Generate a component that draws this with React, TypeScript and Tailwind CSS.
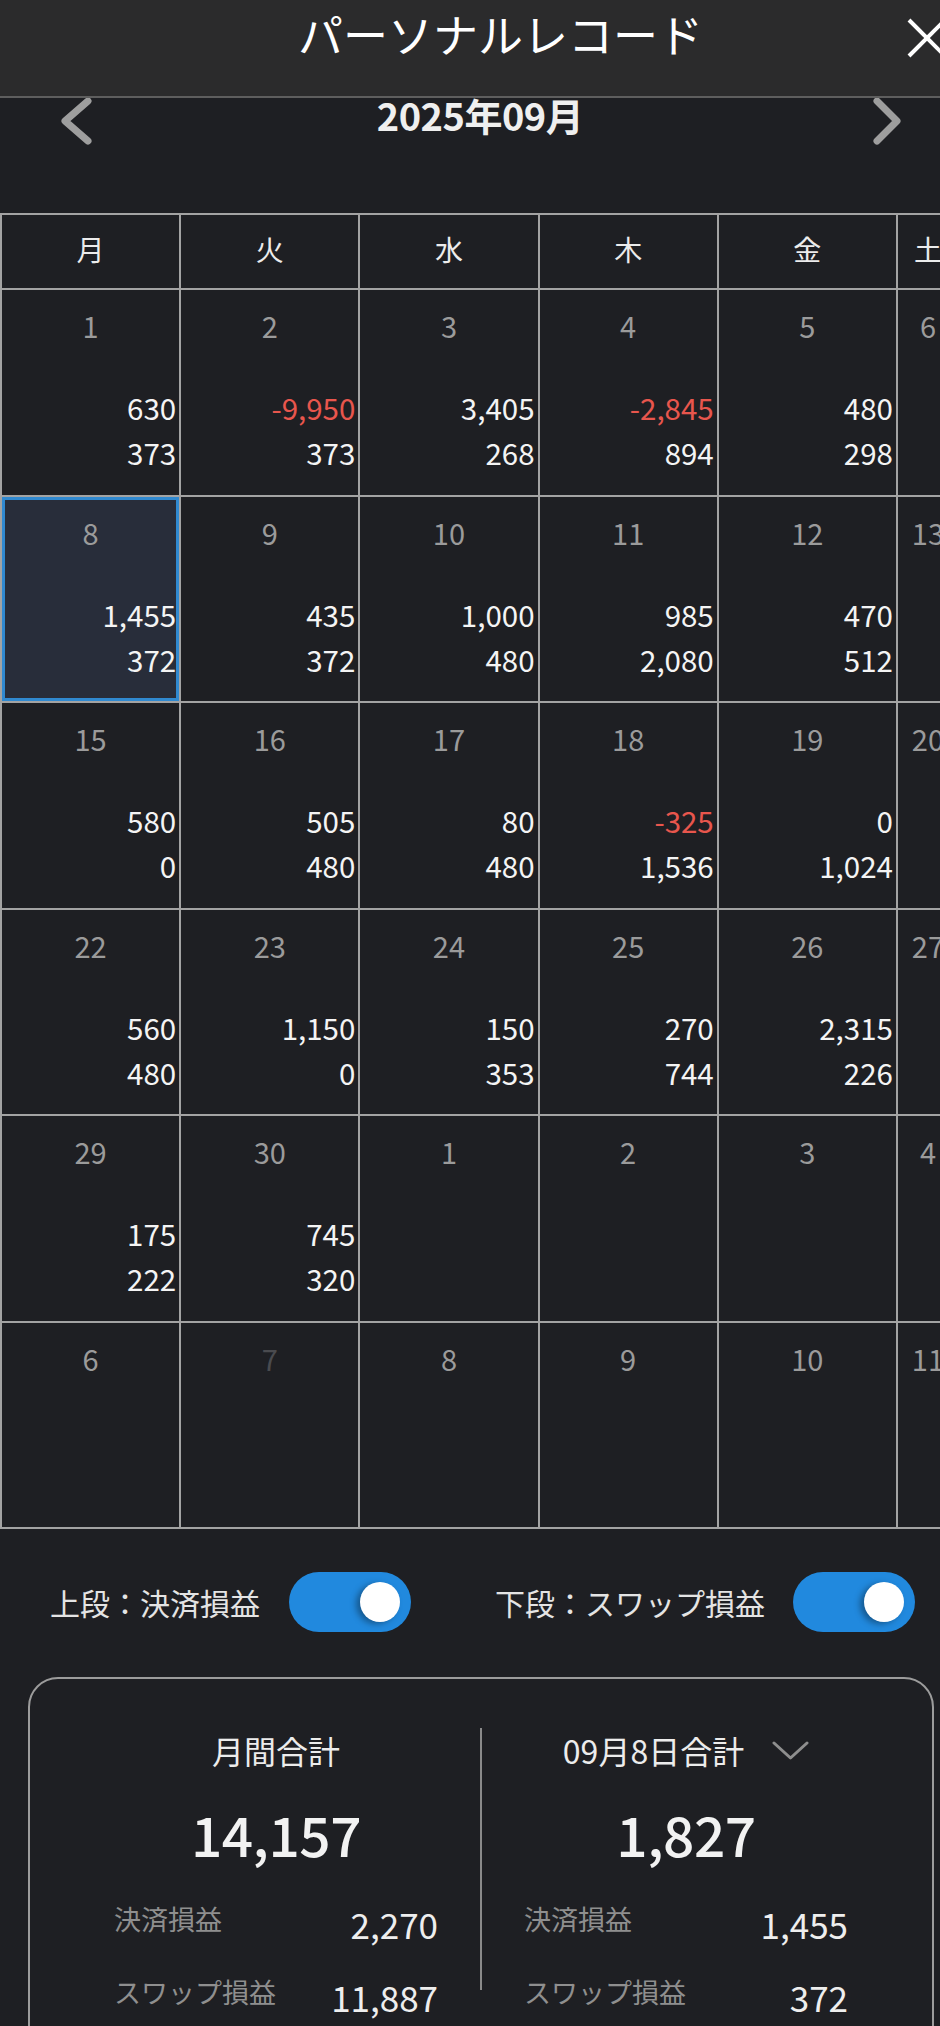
import React from "react";

type Cell = { d: number; a?: string; b?: string; sel?: boolean; dim?: boolean };

const weeks: Cell[][] = [
  [
    { d: 1, a: "630", b: "373" },
    { d: 2, a: "-9,950", b: "373" },
    { d: 3, a: "3,405", b: "268" },
    { d: 4, a: "-2,845", b: "894" },
    { d: 5, a: "480", b: "298" },
    { d: 6 },
  ],
  [
    { d: 8, a: "1,455", b: "372", sel: true },
    { d: 9, a: "435", b: "372" },
    { d: 10, a: "1,000", b: "480" },
    { d: 11, a: "985", b: "2,080" },
    { d: 12, a: "470", b: "512" },
    { d: 13 },
  ],
  [
    { d: 15, a: "580", b: "0" },
    { d: 16, a: "505", b: "480" },
    { d: 17, a: "80", b: "480" },
    { d: 18, a: "-325", b: "1,536" },
    { d: 19, a: "0", b: "1,024" },
    { d: 20 },
  ],
  [
    { d: 22, a: "560", b: "480" },
    { d: 23, a: "1,150", b: "0" },
    { d: 24, a: "150", b: "353" },
    { d: 25, a: "270", b: "744" },
    { d: 26, a: "2,315", b: "226" },
    { d: 27 },
  ],
  [
    { d: 29, a: "175", b: "222" },
    { d: 30, a: "745", b: "320" },
    { d: 1 },
    { d: 2 },
    { d: 3 },
    { d: 4 },
  ],
  [{ d: 6 }, { d: 7, dim: true }, { d: 8 }, { d: 9 }, { d: 10 }, { d: 11 }],
];

const days = ["月", "火", "水", "木", "金", "土"];

function Toggle() {
  return (
    <div className="flex h-[60px] w-[122px] shrink-0 items-center justify-end rounded-full bg-[#2189de] pr-[11px]">
      <div className="h-[40px] w-[40px] rounded-full bg-white shadow-[-4px_2px_6px_rgba(0,0,0,0.35)]" />
    </div>
  );
}

function SummaryCol({
  title,
  total,
  a,
  b,
  chevron,
}: {
  title: string;
  total: string;
  a: string;
  b: string;
  chevron?: boolean;
}) {
  return (
    <div className="flex flex-1 flex-col items-center pt-[51px]">
      <div className="flex items-center">
        <span className="text-[32px] leading-[40px] text-[#ececec]">{title}</span>
        {chevron && (
          <svg width="37" height="20" viewBox="0 0 37 20" className="ml-[28px] mt-[2px]">
            <polyline points="2,2 18.5,17 35,2" fill="none" stroke="#8e8e8e" strokeWidth="3" strokeLinecap="round" strokeLinejoin="round" />
          </svg>
        )}
      </div>
      <div className="mt-[31px] text-[55px] font-medium leading-[64px] tracking-[-0.5px] text-[#f2f2f2]">{total}</div>
      <div className="mt-[34px] flex w-full items-start justify-between px-[42px]">
        <span className="text-[27px] leading-[40px] text-[#8f8f8f]">決済損益</span>
        <span className="mt-[5px] text-[35px] leading-[40px] text-[#eeeeee]">{a}</span>
      </div>
      <div className="mt-[28px] flex w-full items-start justify-between px-[42px]">
        <span className="text-[27px] leading-[40px] text-[#8f8f8f]">スワップ損益</span>
        <span className="mt-[5px] text-[35px] leading-[40px] text-[#eeeeee]">{b}</span>
      </div>
    </div>
  );
}

export default function App() {
  return (
    <div className="h-[2026px] w-[940px] overflow-hidden bg-[#1e1f23] font-['Noto_Sans_CJK_JP',sans-serif] text-white">
      {/* Header */}
      <div className="flex h-[98px] items-start border-b-2 border-[#5e5e5e] bg-[#2b2b2c] pl-[298px] pt-[10px]">
        <span className="text-[45px] leading-[48px] text-white">パーソナルレコード</span>
        <svg width="40" height="40" viewBox="0 0 40 40" className="ml-auto mr-[-7px] mt-[8px] shrink-0">
          <line x1="2" y1="2" x2="38" y2="38" stroke="white" strokeWidth="4" />
          <line x1="2" y1="38" x2="38" y2="2" stroke="white" strokeWidth="4" />
        </svg>
      </div>

      {/* Month row */}
      <div className="flex h-[115px] items-start pl-[56px] pr-[36px]">
        <svg width="40" height="48" viewBox="0 0 40 48" className="shrink-0">
          <polyline points="32,3 9,23 32,43" fill="none" stroke="#9e9e9e" strokeWidth="7" strokeLinecap="round" strokeLinejoin="round" />
        </svg>
        <div className="mt-[1px] flex-1 text-center text-[38px] font-semibold leading-[32px] tracking-[-0.5px] text-[#efefef]">
          2025年09月
        </div>
        <svg width="40" height="48" viewBox="0 0 40 48" className="shrink-0">
          <polyline points="13,3 33,23 13,43" fill="none" stroke="#9e9e9e" strokeWidth="7" strokeLinecap="round" strokeLinejoin="round" />
        </svg>
      </div>

      {/* Calendar grid */}
      <div className="grid w-[960px] grid-cols-[repeat(5,179.2px)_62px] border-l-2 border-t-2 border-[#a3a3a3]">
        {days.map((d) => (
          <div
            key={d}
            className="flex h-[75px] items-center justify-center border-b-2 border-r-2 border-[#a3a3a3] pb-[5px] text-[28px] leading-[36px] text-[#ececec]"
          >
            {d}
          </div>
        ))}
        {weeks.map((w, wi) =>
          w.map((c, ci) => {
            const red = c.a?.startsWith("-");
            return (
              <div
                key={`${wi}-${ci}`}
                className={`flex h-[206.5px] flex-col border-b-2 border-r-2 border-[#a3a3a3] pt-[17px] ${
                  c.sel ? "bg-[#282d3a] shadow-[inset_0_0_0_3px_#3089d0]" : ""
                }`}
              >
                <div
                  className={`h-[36px] text-center text-[29px] leading-[36px] ${
                    c.dim ? "text-[#4a4b4f]" : "text-[#9b9b9b]"
                  }`}
                >
                  {c.d}
                </div>
                {c.a && (
                  <div className="mt-[42px] flex flex-col items-end pr-[3px] text-[29.5px] font-normal leading-[45px]">
                    <span className={red ? "text-[#e8564d]" : "text-[#f4f4f4]"}>{c.a}</span>
                    <span className="text-[#f4f4f4]">{c.b}</span>
                  </div>
                )}
              </div>
            );
          })
        )}
      </div>

      {/* Toggles */}
      <div className="mt-[43px] flex items-center pl-[50px]">
        <span className="text-[30px] leading-[40px] text-[#e4e4e4]">上段：決済損益</span>
        <div className="ml-[29px]">
          <Toggle />
        </div>
        <span className="ml-[84px] text-[30px] leading-[40px] text-[#e4e4e4]">下段：スワップ損益</span>
        <div className="ml-[28px]">
          <Toggle />
        </div>
      </div>

      {/* Summary card */}
      <div className="ml-[28px] mt-[45px] flex h-[420px] w-[906px] rounded-[30px] border-2 border-[#9c9c9c] px-[42px]">
        <SummaryCol title="月間合計" total="14,157" a="2,270" b="11,887" />
        <div className="mt-[49px] h-[262px] w-[2px] bg-[#8a8a8a]" />
        <SummaryCol title="09月8日合計" total="1,827" a="1,455" b="372" chevron />
      </div>
    </div>
  );
}
